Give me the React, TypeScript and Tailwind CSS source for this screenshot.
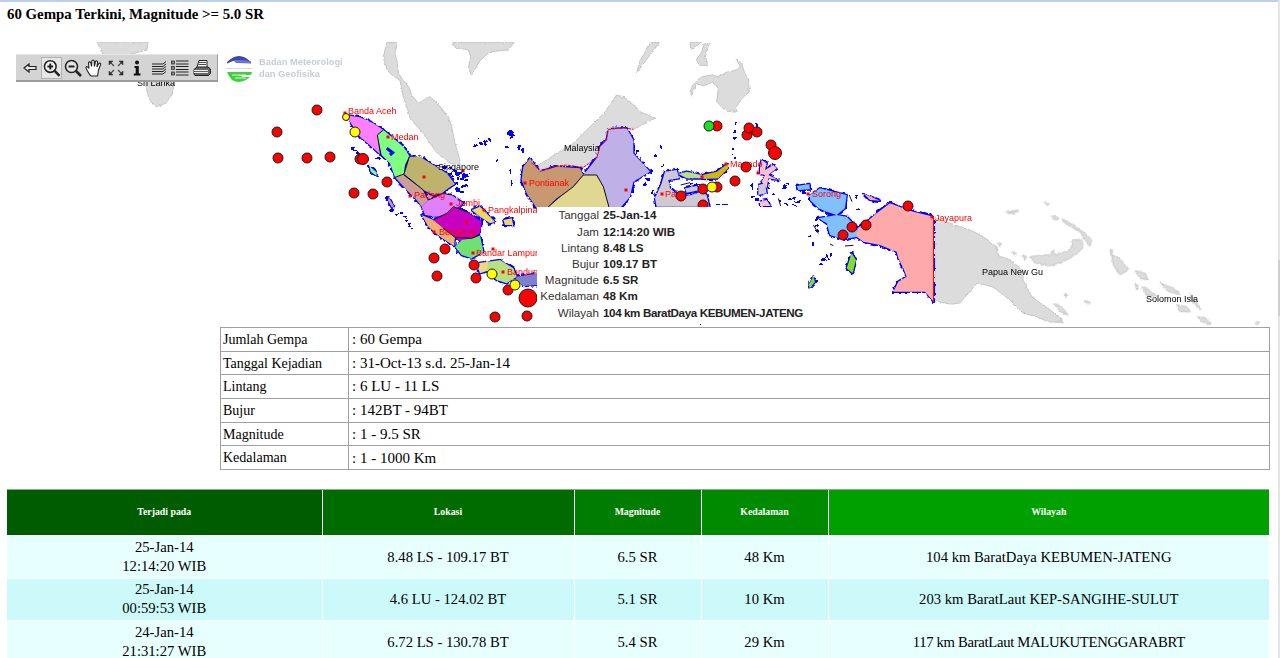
import React from "react";

type Shape = { f: string; p: string };

const Z2 = "translate(340 40) scale(0.33333)";
const Z3 = "translate(340 180) scale(0.33333)";
const Z4 = "translate(650 100) scale(0.33333)";
const Z5 = "translate(960 190) scale(0.33333)";
const Z12 = "translate(680 42) scale(0.33333)";

const GRAY = "#dcdcdc";

const landZ2 = [
  "140,8 172,8 165,40 172,72 176,100 190,122 205,135 215,165 235,190 270,170 292,190 325,230 335,260 345,310 360,360 360,375 330,370 292,340 250,282 210,232 190,170 180,122 142,92 130,50",
  "338,8 522,8 505,30 450,35 420,62 395,105 385,85 392,50 385,30 345,22",
  "575,368 600,390 640,380 680,375 730,382 770,355 780,320 800,300 805,268 850,264 880,268 945,235 900,215 860,175 830,165 790,222 740,270 700,310 650,340 620,360 590,380",
  "932,8 958,8 925,52 890,98 900,62",
];
const landZ12 = [
  "168,48 185,65 195,95 205,110 208,150 190,165 172,190 168,210 155,210 130,200 110,180 115,140 100,120 70,132 50,125 35,160 30,150 40,125 65,105 95,98 115,105 140,90 165,85 180,75",
  "72,5 88,5 75,35 82,70 60,70 48,55 65,30",
  "30,0 65,0 33,22",
];
const landZ5 = [
  "210,200 250,195 270,195 280,180 285,195 315,185 335,175 335,150 365,148 368,175 345,195 310,215 270,228 225,220",
  "305,85 340,105 375,130 395,150 390,170 375,150 360,125 315,100",
  "140,65 175,60 165,70 142,70", "275,78 295,82 292,90 280,88", "255,36 268,42 262,47",
  "112,160 124,160 118,170", "157,185 170,190 165,198", "188,195 200,200 195,210",
  "455,195 480,205 505,240 480,255 460,225", "450,178 458,180 455,195",
  "525,242 555,250 565,270 540,265", "600,278 640,295 660,312 625,305",
  "545,290 570,300 590,320 560,315", "650,345 680,350 692,365 660,365",
  "688,310 720,350 722,360 700,340", "712,380 740,385 755,403 735,403",
  "280,340 305,350 325,375 300,365", "275,375 305,385 310,398 285,395",
  "370,332 392,338 385,342", "315,310 320,312 318,325", "885,400 900,396 892,404",
  "525,280 535,285 530,300",
];

const provZ2: Shape[] = [
  { f: "#ff80ff", p: "15,225 60,232 100,250 130,270 112,285 122,345 95,320 60,290 30,245" },
  { f: "#80ff80", p: "112,285 130,270 155,290 190,320 208,348 195,375 190,412 165,412 150,370 125,345" },
  { f: "#bdb36c", p: "208,350 240,350 280,375 320,400 345,432 325,445 305,460 280,465 250,450 215,420 192,402" },
  { f: "#cc9e96", p: "165,412 192,405 250,450 265,480 245,500 230,480 200,450" },
  { f: "#e080ff", p: "265,480 310,460 335,465 370,490 330,520 290,530 255,525 245,500" },
  { f: "#c89870", p: "570,355 600,395 650,380 720,385 730,405 690,450 650,475 620,505 590,505 560,460 545,420 550,380" },
  { f: "#e0d890", p: "620,505 660,470 700,440 730,405 770,405 790,440 808,505" },
  { f: "#c0b0e8", p: "730,405 770,355 780,320 800,300 805,268 860,265 880,300 880,340 930,395 880,425 870,470 840,505 808,505 790,440 770,405" },
  { f: "#80ff80", p: "88,378 108,395 110,408 92,395" },
  { f: "#cc9e96", p: "146,472 162,498 156,503 144,482" },
];
const provZ3: Shape[] = [
  { f: "#c800c0", p: "280,120 320,100 340,80 380,95 425,125 420,160 395,175 360,182 340,170 310,145" },
  { f: "#f0b070", p: "245,105 280,120 310,145 345,172 342,198 300,170 265,140" },
  { f: "#70e070", p: "345,200 365,180 395,175 420,165 430,215 395,235 365,225" },
  { f: "#f0d880", p: "410,250 445,245 450,270 420,280" },
  { f: "#b8e080", p: "445,245 480,240 520,265 530,290 500,310 470,300 440,270" },
  { f: "#8080d0", p: "530,290 595,280 595,315 550,318 525,300" },
  { f: "#f0d860", p: "395,90 420,80 465,125 450,130 420,110" },
  { f: "#f0d860", p: "490,120 515,115 520,135 495,135" },
];
const provZ4: Shape[] = [
  { f: "#d0c8d0", p: "20,320 15,295 35,250 45,215 80,210 88,235 55,240 60,265 90,290 125,285 155,275 170,285 178,320" },
  { f: "#b8e080", p: "85,222 110,215 155,225 160,235 110,235" },
  { f: "#d4b800", p: "158,225 200,215 235,190 235,205 205,235 160,237" },
  { f: "#d0c8d0", p: "105,265 140,258 150,270 110,278" },
  { f: "#ffc0c8", p: "335,180 350,190 345,210 370,195 380,205 355,225 385,240 355,235 350,265 335,245 345,225 330,222 330,200" },
  { f: "#d0c8d0", p: "325,255 345,250 350,280 325,285" },
  { f: "#ffc0c8", p: "330,305 350,300 362,318 330,318" },
  { f: "#80c0ff", p: "480,285 510,265 550,275 590,285 585,325 560,345 530,335 505,325 480,300" },
  { f: "#80c0ff", p: "505,355 560,345 590,350 620,380 622,410 580,418 540,405 530,370" },
  { f: "#80c0ff", p: "440,258 478,252 480,268 445,270" },
  { f: "#ffaaaa", p: "622,385 650,365 680,340 720,310 760,325 790,335 851,350 851,605 825,575 775,575 730,575 745,545 770,530 760,505 745,475 740,455 690,435 640,425 620,410" },
  { f: "#ffaaaa", p: "640,280 690,302 660,300" },
  { f: "#80e020", p: "590,505 605,460 618,480 608,520" },
  { f: "#80e020", p: "475,555 490,530 495,545 480,565" },
];
const bits: [number, number, number, number][] = [
  [508, 130, 5, 5], [511, 134, 3, 4], [479, 142, 4, 3], [484, 140, 3, 5], [488, 139, 3, 3], [474, 144, 3, 3],
  [505, 146, 3, 2], [518, 146, 2, 3], [521, 149, 3, 3], [522, 152, 2, 2], [496, 160, 2, 2], [510, 170, 1, 4], [511, 180, 1, 5],
  [435, 164, 5, 2], [441, 166, 6, 2], [448, 167, 4, 2], [453, 170, 4, 2], [456, 172, 6, 3], [448, 172, 5, 3], [462, 174, 6, 3],
  [460, 178, 5, 2], [455, 181, 4, 4], [460, 184, 7, 3], [455, 188, 5, 3], [459, 191, 5, 2], [464, 179, 4, 2], [468, 172, 2, 2],
  [451, 176, 3, 2], [457, 176, 2, 3], [368, 166, 3, 2], [376, 158, 4, 2], [350, 147, 4, 2], [353, 149, 4, 2], [356, 152, 3, 3],
  [400, 212, 3, 2], [403, 216, 3, 2], [406, 220, 3, 2], [408, 224, 3, 3], [386, 196, 2, 3], [389, 199, 2, 2],
  [391, 210, 2, 2], [396, 214, 2, 1], [411, 228, 2, 2], [477, 138, 2, 2], [632, 145, 3, 5], [636, 150, 3, 4], [628, 183, 4, 3],
  [631, 190, 3, 3], [651, 170, 2, 3], [655, 155, 2, 2], [662, 164, 2, 2], [652, 190, 2, 3], [658, 185, 2, 2], [660, 146, 2, 2],
  [644, 182, 2, 4], [646, 178, 3, 2], [735, 122, 2, 2], [734, 131, 2, 2], [733, 137, 3, 2], [733, 148, 2, 2], [732, 153, 2, 2],
  [734, 157, 2, 2], [755, 122, 2, 2], [757, 124, 2, 2], [786, 183, 4, 2], [783, 186, 4, 2], [797, 186, 4, 3], [802, 191, 4, 3],
  [788, 198, 7, 2], [795, 201, 6, 2], [780, 200, 2, 2], [792, 205, 7, 1], [816, 229, 2, 3], [808, 235, 2, 2], [813, 242, 2, 3],
  [822, 258, 4, 3], [826, 255, 3, 4], [820, 263, 2, 2], [830, 253, 2, 3], [862, 192, 3, 2], [868, 196, 3, 2], [855, 195, 2, 2],
  [870, 200, 3, 1], [887, 204, 4, 1], [892, 205, 5, 1], [856, 209, 3, 1], [828, 214, 3, 2], [815, 225, 4, 2], [815, 218, 3, 2],
  [895, 250, 5, 3], [900, 247, 3, 6], [905, 268, 3, 3], [908, 272, 4, 2], [700, 323, 3, 2], [752, 195, 3, 2], [755, 198, 4, 2],
  [768, 188, 2, 2], [764, 185, 2, 3], [772, 193, 3, 2], [716, 204, 5, 1], [722, 204, 6, 1], [784, 203, 3, 2], [752, 184, 2, 6],
  [706, 189, 3, 1], [689, 187, 6, 1], [695, 184, 5, 1], [690, 183, 3, 2], [441, 220, 2, 2], [503, 219, 3, 2], [507, 218, 4, 4],
];
const blackZ4 = ["385,295 392,318", "598,285 606,305", "490,375 505,400", "540,432 550,437", "585,438 610,436", "92,255 120,248", "625,325 630,330"];

const labelsRed: [string, number, number][] = [
  ["Banda Aceh", 348, 114], ["Medan", 391, 140], ["Padang", 414, 198], ["Jambi", 456, 206],
  ["Pangkalpinang", 488, 213], ["Pontianak", 529, 186], ["Bengkulu", 439, 235], ["Bandar Lampung", 476, 256],
  ["Bandung", 507, 275], ["Manado", 730, 167], ["Palu", 665, 197], ["Sorong", 812, 197], ["Jayapura", 935, 221],
];
const labelsBlack: [string, number, number][] = [
  ["Singapore", 438, 170], ["Malaysia", 564, 151], ["Papua New Gu", 982, 275], ["Solomon Isla", 1146, 302], ["Sri Lanka", 137, 86],
];
const dots: [number, number][] = [
  [345, 113], [388, 137], [410, 196], [451, 204], [484, 210], [525, 183], [434, 232], [473, 253], [503, 272],
  [493, 249], [726, 164], [662, 194], [808, 194], [932, 217], [424, 177], [463, 171], [626, 190], [466, 222], [702, 177], [758, 173],
];
const quakes: [number, number, number, string][] = [
  [317, 110, 5, "#f00"], [277, 132, 5, "#f00"], [278, 158, 5, "#f00"], [307, 158, 5, "#f00"], [330, 157, 5, "#f00"],
  [346, 117, 3.5, "#ff0"], [355, 132, 5, "#ff0"], [360, 159, 5, "#f00"], [363, 159, 5.5, "#f00"], [387, 182, 5, "#f00"],
  [354, 193, 5, "#f00"], [373, 194, 5, "#f00"], [445, 249, 5, "#f00"], [434, 258, 5, "#f00"], [437, 276, 5, "#f00"],
  [474, 265, 5, "#f00"], [476, 278, 5, "#f00"], [492, 274, 5, "#ff0"], [508, 290, 5, "#f00"], [515, 285, 5, "#ff0"],
  [528, 298, 9, "#f00"], [495, 317, 5, "#f00"], [527, 316, 5, "#f00"], [717, 126, 5, "#f00"], [709, 126, 5, "#20e020"],
  [747, 135, 5, "#f00"], [749, 128, 5, "#f00"], [757, 132, 5, "#f00"], [771, 145, 5, "#f00"], [775, 153, 6.5, "#f00"],
  [746, 167, 5, "#f00"], [735, 181, 5, "#f00"], [703, 189, 5, "#f00"], [717, 187, 5, "#f00"], [712, 187, 5, "#ff0"],
  [681, 196, 5, "#f00"], [703, 205, 5, "#f00"], [852, 227, 5, "#f00"], [866, 225, 5, "#f00"], [843, 235, 5, "#f00"], [908, 206, 5, "#f00"],
];

const Pts = ({ p, fill, stroke, w }: { p: string; fill: string; stroke?: string; w?: number }) => (
  <polygon points={p} fill={fill} stroke={stroke ?? "none"} strokeWidth={w ?? 1} vectorEffect="non-scaling-stroke" strokeLinejoin="round" />
);

const Land = ({ t, items }: { t: string; items: string[] }) => (
  <g transform={t}>
    {items.map((p, i) => <Pts key={i} p={p} fill={GRAY} stroke="#c4c4c4" w={1} />)}
  </g>
);

const Outline = ({ t, items }: { t: string; items: Shape[] }) => (
  <g transform={t}>
    {items.map((s, i) => <Pts key={i} p={s.p} fill="#0000ff" stroke="#0000ff" w={2.6} />)}
  </g>
);

const Fill = ({ t, items }: { t: string; items: Shape[] }) => (
  <g transform={t}>
    {items.map((s, i) => <Pts key={i} p={s.p} fill={s.f} />)}
  </g>
);

const MapCanvas = () => (
  <svg viewBox="0 42 1280 284" width={1280} height={284} className="absolute left-0 top-0">
    <defs>
      <filter id="rough" filterUnits="userSpaceOnUse" x="0" y="42" width="1280" height="284" colorInterpolationFilters="sRGB">
        <feTurbulence type="fractalNoise" baseFrequency="0.25" numOctaves={2} seed={4} result="n" />
        <feDisplacementMap in="SourceGraphic" in2="n" scale={5} xChannelSelector="R" yChannelSelector="G" />
      </filter>
      <filter id="roughFine" filterUnits="userSpaceOnUse" x="0" y="42" width="1280" height="284" colorInterpolationFilters="sRGB">
        <feTurbulence type="fractalNoise" baseFrequency="0.3" numOctaves={2} seed={9} result="n" />
        <feDisplacementMap in="SourceGraphic" in2="n" scale={3} xChannelSelector="R" yChannelSelector="G" />
      </filter>
    </defs>
    <g filter="url(#roughFine)">
      <Land t={Z2} items={landZ2} />
      <Land t={Z12} items={landZ12} />
      <Land t={Z5} items={landZ5} />
      <polygon
        points="935,218 960,227 970,230 980,235 988,240 997,247 997,255 1010,260 1023,270 1023,280 1032,297 1043,305 1053,312 1063,322 1050,322 1037,317 1023,313 1010,300 993,287 977,283 967,295 960,303 950,304 935,301"
        fill={GRAY} stroke="#c4c4c4"
      />
      <polygon points="97,42 148,42 147,50 135,53 120,60 110,65 104,56" fill={GRAY} stroke="#c4c4c4" />
      <polygon points="145,80 175,80 172,95 165,104 155,107 150,100 146,88" fill={GRAY} stroke="#c4c4c4" />
    </g>
    <g filter="url(#rough)">
      {bits.map(([x, y, w, h], i) => <rect key={i} x={x} y={y} width={w} height={h} fill="#0000ff" />)}
      <Outline t={Z2} items={provZ2} />
      <Outline t={Z3} items={provZ3} />
      <Outline t={Z4} items={provZ4} />
    </g>
    <Fill t={Z2} items={provZ2} />
    <Fill t={Z3} items={provZ3} />
    <Fill t={Z4} items={provZ4} />
    <g transform={Z2} fill="none" stroke="#111" strokeWidth={1}>
      <polyline vectorEffect="non-scaling-stroke" points="112,285 122,345" />
      <polyline vectorEffect="non-scaling-stroke" points="130,270 112,285" />
      <polyline vectorEffect="non-scaling-stroke" points="208,350 192,402 165,412" />
      <polyline vectorEffect="non-scaling-stroke" points="192,405 250,450 265,480 310,460 335,465" />
      <polyline vectorEffect="non-scaling-stroke" points="620,505 660,470 700,440 730,405 770,405 790,440 808,505" />
      <polyline vectorEffect="non-scaling-stroke" points="140,325 158,338 150,345" stroke="#0000ff" strokeWidth={3} />
    </g>
    <g transform={Z3} fill="none" stroke="#111" strokeWidth={1}>
      <polyline vectorEffect="non-scaling-stroke" points="280,120 320,100 340,80 380,95" />
      <polyline vectorEffect="non-scaling-stroke" points="310,145 345,172 395,175 420,165" />
    </g>
    <polyline
      transform={Z2}
      points="575,368 600,392 640,380 680,375 730,382 770,355 780,320 800,300 805,268 850,264 880,268"
      fill="none" stroke="#ff0000" strokeWidth={1} strokeDasharray="3 1" vectorEffect="non-scaling-stroke"
    />
    <line x1={933.5} y1={216} x2={933.5} y2={301} stroke="#ff0000" strokeWidth={1} />
    <g transform={Z4} stroke="#111">
      {blackZ4.map((p, i) => <polyline key={i} points={p} fill="none" vectorEffect="non-scaling-stroke" />)}
    </g>
    {dots.map(([x, y], i) => <rect key={i} x={x - 1.5} y={y - 1.5} width={3} height={3} fill="#f00" />)}
    {labelsRed.map(([s, x, y]) => (
      <text key={s} x={x} y={y} fontSize={9} fill="#ff0000" fontFamily="'Liberation Sans', sans-serif">{s}</text>
    ))}
    {labelsBlack.map(([s, x, y]) => (
      <text key={s} x={x} y={y} fontSize={9} fill="#000" fontFamily="'Liberation Sans', sans-serif">{s}</text>
    ))}
    {quakes.map(([x, y, r, c], i) => <circle key={i} cx={x} cy={y} r={r} fill={c} stroke="#1a1a1a" strokeWidth={1} />)}
  </svg>
);

const Ico = ({ children }: { children: React.ReactNode }) => (
  <svg viewBox="0 0 20 20" width={20} height={20} fill="none" stroke="#222" strokeWidth={1.4}>{children}</svg>
);

const tools: { on?: boolean; icon: React.ReactNode }[] = [
  { icon: <Ico><path d="M4 10 L9 6 V8.5 H16 V11.5 H9 V14 Z" fill="#e8e8e8" strokeWidth={1.2} /></Ico> },
  {
    on: true,
    icon: <Ico><circle cx="8.5" cy="8.5" r="6" strokeWidth={1.6} fill="#f4f4f4" /><path d="M5.5 8.5 H11.5 M8.5 5.5 V11.5" strokeWidth={2} /><path d="M13 13 L18 18" strokeWidth={2.6} /></Ico>,
  },
  {
    icon: <Ico><circle cx="8.5" cy="8.5" r="6" strokeWidth={1.6} fill="#e4e4e4" /><path d="M5.5 8.5 H11.5" strokeWidth={2} /><path d="M13 13 L18 18" strokeWidth={2.6} /></Ico>,
  },
  {
    icon: (
      <Ico>
        <path d="M6 17 C4 14 2 11 2 9.5 C2 8 4 8.5 5 10.5 L4.5 5 C4.5 3.5 6.5 3.5 6.8 5 L7.6 8.5 L7.8 3 C8 1.6 10 1.6 10.2 3 L10.4 8.5 L11.5 3.6 C12 2.4 13.8 2.8 13.6 4.2 L12.9 9 L14.8 5.6 C15.6 4.6 17 5.4 16.6 6.6 L14.5 12 C14 14.5 14 16 13.5 18 H7 Z" fill="#fff" strokeWidth={1.1} />
      </Ico>
    ),
  },
  {
    icon: (
      <Ico>
        <path d="M3 7 V3 H7 Z M17 7 V3 H13 Z M3 13 V17 H7 Z M17 13 V17 H13 Z" fill="#333" stroke="#333" strokeWidth={0.6} />
        <path d="M5 5 L8 8 M15 5 L12 8 M5 15 L8 12 M15 15 L12 12" strokeWidth={1.1} stroke="#444" />
      </Ico>
    ),
  },
  { icon: <Ico><circle cx="10" cy="4.5" r="2" fill="#111" stroke="none" /><path d="M7.5 8 H11.8 V15.5 H13.5 V17.5 H6.8 V15.5 H8.7 V10 H7.5 Z" fill="#111" stroke="none" /></Ico> },
  {
    icon: (
      <Ico>
        <path d="M3 6 H14 L17 3.5 M3 8.5 H14 L17 6 M3 11 H14 L17 8.5 M3 13.5 H14 L17 11 M3 16 H14 L17 13.5" strokeWidth={1} />
      </Ico>
    ),
  },
  {
    icon: (
      <Ico>
        <rect x="1.5" y="3" width="3" height="3" fill="#888" strokeWidth={0.7} />
        <rect x="1.5" y="8.5" width="3" height="3" fill="#888" strokeWidth={0.7} />
        <rect x="1.5" y="14" width="3" height="3" fill="#888" strokeWidth={0.7} />
        <path d="M6 3 H18.5 M6 6 H18.5 M6 8.5 H18.5 M6 11.5 H18.5 M6 14 H18.5 M6 17 H18.5" strokeWidth={1} />
      </Ico>
    ),
  },
  {
    icon: (
      <Ico>
        <path d="M5 9 L7 2.5 H15 L15 9" fill="#f4f4f4" strokeWidth={1} />
        <path d="M7 4.5 H14 M6.5 6.5 H14" strokeWidth={0.8} />
        <path d="M2 16 V11.5 L5 9 H16 L18.5 11 V15.5 L16.5 17.5 H3 Z" fill="#666" strokeWidth={1} />
        <path d="M2 12.5 H16 M2 14.5 H16" stroke="#eee" strokeWidth={1} />
      </Ico>
    ),
  },
];

const Toolbar = () => (
  <div className="absolute left-[16px] top-[12px] w-[202px] h-[28px] flex items-center pl-[3px] bg-[#d4d4d4] border-r border-b-2 border-[#9c9c9c] border-t border-t-[#e8e8e8]">
    {tools.map((t, i) => (
      <div
        key={i}
        className={t.on
          ? "w-[21.5px] h-[22px] flex items-center justify-center bg-[#e6e6e6] border border-[#b0b0b0]"
          : "w-[21.5px] h-[22px] flex items-center justify-center"}
      >
        {t.icon}
      </div>
    ))}
  </div>
);

const Logo = () => (
  <div className="absolute left-[226px] top-[12px] flex items-start gap-[7px]">
    <svg viewBox="0 0 26 29" width={26} height={29} fill="none">
      <path d="M1 8 Q13 -4 25 8 L25 9.5 Q13 3 1 9.5 Z" fill="#3a46b0" />
      <path d="M8 7 Q13 5 25 7.5 L25 9.5 L10 9 Z" fill="#6a74c8" />
      <path d="M0 14.5 H26" stroke="#d8d8d8" strokeWidth={1} />
      <path d="M1 18 H26 L25 21 H13 L17 23 H24 Q15 31 6 26 L3 22 Z" fill="#3fcf3f" />
      <path d="M6 21 H20 M9 24 H20" stroke="#fff" strokeWidth={0.8} />
    </svg>
    <div className="pt-[2px] font-['Liberation_Sans',sans-serif] font-bold text-[9.3px] leading-[12px] text-[#c8ccd4] whitespace-nowrap">
      <div>Badan Meteorologi</div>
      <div>dan Geofisika</div>
    </div>
  </div>
);

const tipRows = [
  ["Tanggal", "25-Jan-14"],
  ["Jam", "12:14:20 WIB"],
  ["Lintang", "8.48 LS"],
  ["Bujur", "109.17 BT"],
  ["Magnitude", "6.5 SR"],
  ["Kedalaman", "48 Km"],
  ["Wilayah", "104 km BaratDaya KEBUMEN-JATENG"],
];

const Tooltip = () => (
  <div className="absolute left-[537px] top-[165px] w-[271px] h-[117px] bg-white font-['Liberation_Sans',sans-serif] text-[11.6px] text-[#222]">
    {tipRows.map(([k, v]) => (
      <div key={k} className="flex h-[16.2px] items-center gap-[4px] whitespace-nowrap">
        <span className="w-[62px] shrink-0 text-right text-[#333]">{k}</span>
        <span className={k === "Wilayah" ? "font-bold tracking-[-0.38px]" : "font-bold"}>{v}</span>
      </div>
    ))}
  </div>
);

const info = [
  ["Jumlah Gempa", ": 60 Gempa"],
  ["Tanggal Kejadian", ": 31-Oct-13 s.d. 25-Jan-14"],
  ["Lintang", ": 6 LU - 11 LS"],
  ["Bujur", ": 142BT - 94BT"],
  ["Magnitude", ": 1 - 9.5 SR"],
  ["Kedalaman", ": 1 - 1000 Km"],
];

const heads = [
  ["Terjadi pada", "bg-[#005c00]", "w-[315px]"],
  ["Lokasi", "bg-[#006c00]", "w-[252px]"],
  ["Magnitude", "bg-[#007c00]", "w-[127px]"],
  ["Kedalaman", "bg-[#008a00]", "w-[127px]"],
  ["Wilayah", "bg-[#00a000]", ""],
];

const rows = [
  ["25-Jan-14", "12:14:20 WIB", "8.48 LS - 109.17 BT", "6.5 SR", "48 Km", "104 km BaratDaya KEBUMEN-JATENG"],
  ["25-Jan-14", "00:59:53 WIB", "4.6 LU - 124.02 BT", "5.1 SR", "10 Km", "203 km BaratLaut KEP-SANGIHE-SULUT"],
  ["24-Jan-14", "21:31:27 WIB", "6.72 LS - 130.78 BT", "5.4 SR", "29 Km", "117 km BaratLaut MALUKUTENGGARABRT"],
];

export default function App() {
  return (
    <div className="relative w-[1280px] h-[658px] overflow-hidden bg-white font-['Liberation_Serif',serif] text-black">
      <div className="h-[2px] bg-[#bcd0ea]" />
      <div className="h-[40px] pl-[7px] pt-[3px] text-[14.85px] leading-[18px] font-bold">60 Gempa Terkini, Magnitude &gt;= 5.0 SR</div>

      <div className="relative h-[284px] w-[1268px] overflow-hidden">
        <MapCanvas />
        <Toolbar />
        <Logo />
        <Tooltip />
      </div>

      <table className="ml-[220px] mt-[1px] w-[1050px] table-fixed border-collapse border border-[#a0a0a0]">
        <tbody>
          {info.map(([a, b]) => (
            <tr key={a} className="h-[23.7px]">
              <td className="w-[128px] border border-[#a0a0a0] pl-[2px] pr-0 py-0 text-[14px] whitespace-nowrap">{a}</td>
              <td className="border border-[#a0a0a0] pl-[3px] pr-0 py-0 text-[15px]">{b}</td>
            </tr>
          ))}
        </tbody>
      </table>

      <table className="ml-[7px] mt-[19px] w-[1262px] table-fixed border-collapse text-[14.67px] text-center">
        <thead>
          <tr className="h-[46px]">
            {heads.map(([h, bg, w]) => (
              <th key={h} className={`${bg} ${w} border-l border-white first:border-l-0 border-t border-t-[#8aaa8a] text-[9.8px] font-bold text-white p-0`}>
                {h}
              </th>
            ))}
          </tr>
        </thead>
        <tbody>
          {rows.map((r, i) => (
            <tr key={i} className={i % 2 === 0 ? "h-[42.5px] bg-[#e8ffff]" : "h-[42.5px] bg-[#ccfafa]"}>
              <td className="leading-[19px] p-0 border-l border-t border-white first:border-l-0">{r[0]}<br />{r[1]}</td>
              {r.slice(2).map((c, j) => (
                <td key={j} className={i === 2 && j === 3 ? "p-0 border-l border-t border-white tracking-[-0.3px]" : "p-0 border-l border-t border-white"}>{c}</td>
              ))}
            </tr>
          ))}
        </tbody>
      </table>

      <div className="absolute right-0 top-0 w-[2px] h-full bg-[#e4e4e4]">
        <div className="mt-[260px] h-[56px] bg-[#cfcfcf]" />
      </div>
    </div>
  );
}
